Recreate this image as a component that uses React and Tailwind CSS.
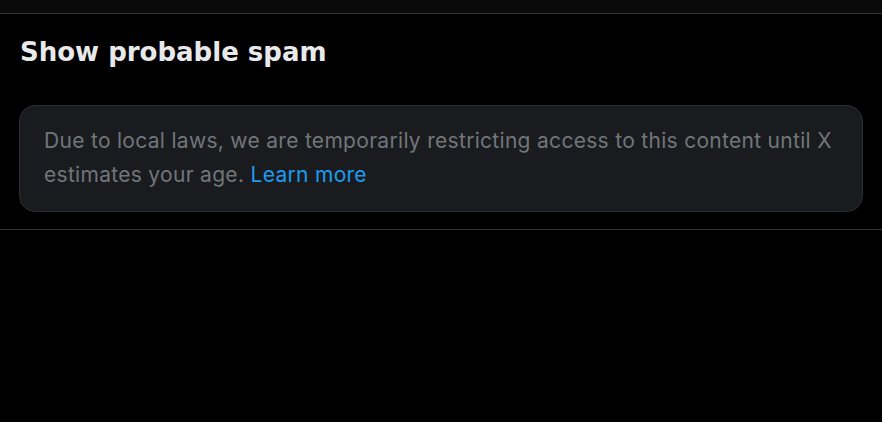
import React from 'react';

const App = () => {
  return (
    <div className="w-[882px] h-[422px] bg-black overflow-hidden" style={{ fontFamily: 'Inter, "Open Sans", "Noto Sans", sans-serif' }}>
      {/* Top strip */}
      <div className="h-[14px] bg-[#0a0a0a] border-b border-[#2f3336]" />

      {/* Section */}
      <div className="border-b border-[#2f3336] pb-[17px]">
        <h2
          className="px-[20px] pt-[22px] pb-[37px] text-[26px] leading-[32px] font-bold text-[#e7e9ea]"
          style={{ fontFamily: '"DejaVu Sans", Inter, sans-serif' }}
        >
          Show probable spam
        </h2>
        <div className="mx-[19px] rounded-[16px] border border-[#2a2d31] bg-[#1a1b1e] px-[24px] pt-[18px] pb-[19px]">
          <p className="text-[21px] leading-[34px] tracking-[0.3px] text-[#71767b]">
            Due to local laws, we are temporarily restricting access to this content until X estimates your age.{' '}
            <span className="text-[#1d9bf0]">Learn more</span>
          </p>
        </div>
      </div>
    </div>
  );
};

export default App;
